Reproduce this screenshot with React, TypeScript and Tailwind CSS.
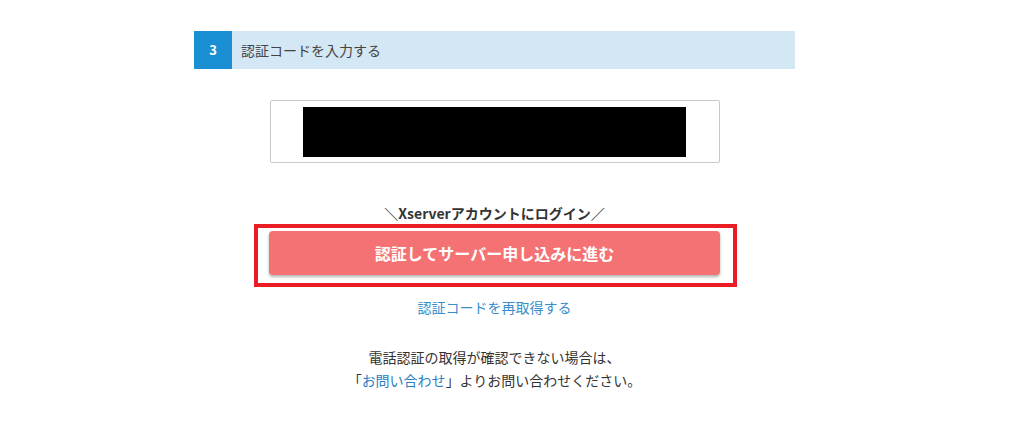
import React from "react";

export default function App() {
  return (
    <div
      className="w-[1024px] h-[436px] bg-white overflow-hidden text-[#333333]"
      style={{ fontFamily: '"Noto Sans CJK JP", "Noto Sans", sans-serif' }}
    >
      <div className="ml-[194px] w-[601px] pt-[31px] flex flex-col">
        <div className="h-[38px] flex items-stretch bg-[#d3e7f4]">
          <div className="w-[38px] bg-[#1a8fd4] flex items-center justify-center text-white font-bold text-[13px]">
            3
          </div>
          <div className="flex items-center pl-[9px] text-[14px] text-[#444444]">
            認証コードを入力する
          </div>
        </div>

        <div className="mt-[31px] mx-auto w-[450px] h-[63px] border border-[#c8c8c8] rounded-[2px] pt-[6px] pl-[32px]">
          <div className="w-[383px] h-[50px] bg-black" />
        </div>

        <div className="mt-[40px] text-center text-[14px] leading-[20px] font-bold text-[#333333]">
          ＼Xserverアカウントにログイン／
        </div>

        <div className="relative mt-[8px] mx-auto w-[451px]">
          <button className="w-full h-[44px] rounded-[4px] bg-[#f57274] text-white font-bold text-[16px] shadow-[0_2px_3px_rgba(0,0,0,0.3)]">
            認証してサーバー申し込みに進む
          </button>
          <div className="absolute left-[-15px] top-[-7px] w-[483px] h-[63px] border-[4.5px] border-[#ea1c24] pointer-events-none" />
        </div>

        <div className="mt-[22px] text-center text-[14px] leading-[20px] text-[#3a8dc8]">
          認証コードを再取得する
        </div>

        <div className="mt-[29px] text-center text-[14px] leading-[23px] text-[#333333]">
          <div>電話認証の取得が確認できない場合は、</div>
          <div>
            「<span className="text-[#2b7fc3]">お問い合わせ</span>」よりお問い合わせください。
          </div>
        </div>
      </div>
    </div>
  );
}
